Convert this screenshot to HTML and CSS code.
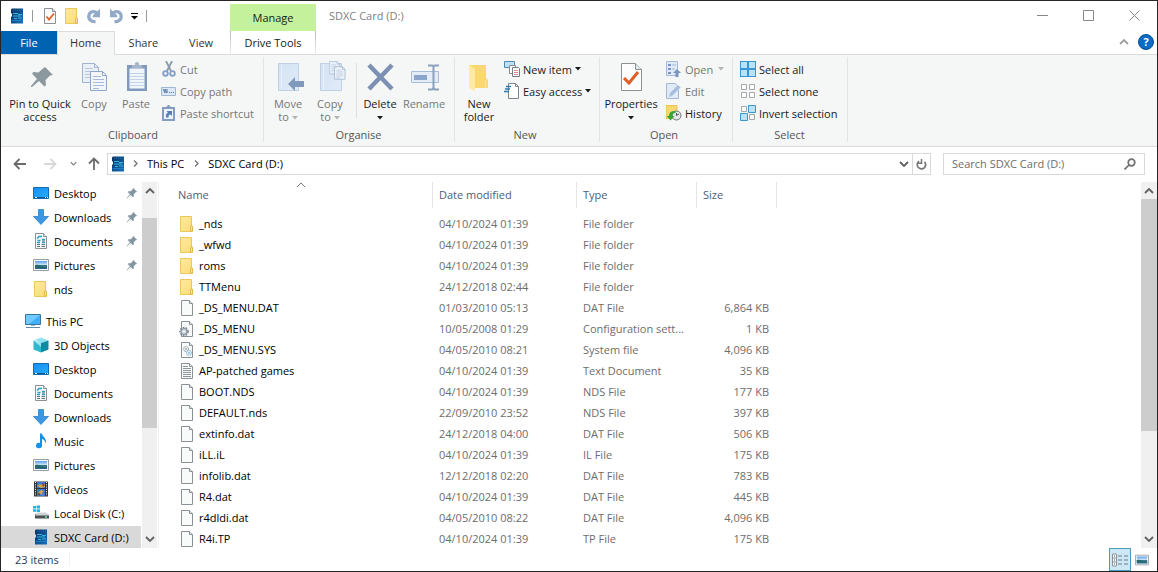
FILE: index.html
```html
<!DOCTYPE html>
<html lang="en-GB">
<head>
    <meta charset="UTF-8">
    <meta name="viewport" content="width=device-width, initial-scale=1.0">
    <title>SDXC Card (D:)</title>
    <link rel="stylesheet" href="styles.css">
</head>
<body>
    <!-- Shared icons -->
    <svg class="sprite" aria-hidden="true">
        <defs>
            <linearGradient id="g-blue" x1="0" y1="0" x2="1" y2="1"><stop offset="0" stop-color="#1a8df0"/><stop offset="1" stop-color="#21b0ff"/></linearGradient>
            <linearGradient id="g-sky" x1="0" y1="0" x2="0" y2="1"><stop offset="0" stop-color="#5b9bea"/><stop offset=".5" stop-color="#d6ebf7"/><stop offset=".55" stop-color="#3d7a86"/><stop offset="1" stop-color="#1f5f9c"/></linearGradient>
            <linearGradient id="g-folder" x1="0" y1="0" x2="1" y2="1"><stop offset="0" stop-color="#ffe9a0"/><stop offset="1" stop-color="#fbdc77"/></linearGradient>
            <linearGradient id="g-pale" x1="0" y1="0" x2="1" y2="1"><stop offset="0" stop-color="#d3e2f3"/><stop offset="1" stop-color="#e2ebf7"/></linearGradient>
            <linearGradient id="g-card" x1="0" y1="0" x2="1" y2="1"><stop offset="0" stop-color="#0a2f5e"/><stop offset="1" stop-color="#1473c0"/></linearGradient>
        </defs>
        <symbol id="i-card" viewBox="0 0 16 16">
            <path d="M2 1.500L3 .5h11v15H2V9l1-1V6L2 5z" fill="url(#g-card)"/>
            <path d="M4 2h9" stroke="#1779b8" stroke-dasharray="1 1"/>
            <path d="M4 5.500h5M9 6.500h4M4 8h8M5 10.500h3M9 10h4" stroke="#35b4e0" fill="none"/>
            <path d="M3 12.500h11" stroke="#1b7fc9"/>
        </symbol>
        <symbol id="i-folder" viewBox="0 0 16 16">
            <path d="M1.500 .5h11v9.500h1v5.500h-12z" fill="url(#g-folder)" stroke="#ecc75b"/>
            <path d="M11.500 15V11l1-1.500 1 1.500v4z" fill="#ffe896" stroke="#e0b84a"/>
        </symbol>
        <symbol id="i-file" viewBox="0 0 16 16">
            <path d="M2.500.5h8l3 3v12h-11z" fill="#f9fafa" stroke="#8b9094"/>
            <path d="M10.500.5v3h3" fill="#e4e7e8" stroke="#8b9094"/>
        </symbol>
        <symbol id="i-check" viewBox="0 0 16 16">
            <use href="#i-file"/>
            <path d="M4.500 8.500l2.500 3 5-6" fill="none" stroke="#e0622a" stroke-width="1.800"/>
        </symbol>
        <symbol id="i-text" viewBox="0 0 16 16">
            <use href="#i-file"/>
            <path d="M4 3.500h5M4 5.500h8M4 7.500h8M4 9.500h8M4 11.500h8M4 13.500h8" stroke="#8d9499"/>
        </symbol>
        <symbol id="i-ini" viewBox="0 0 16 16">
            <use href="#i-file"/>
            <circle cx="5" cy="10.500" r="3.800" fill="#dfe7ec" stroke="#7b8892" stroke-width="2" stroke-dasharray="1.600 1.100"/>
            <circle cx="5" cy="10.500" r="3" fill="#ccd6dc" stroke="#83919b"/>
            <circle cx="5" cy="10.500" r="1" fill="#fff"/>
        </symbol>
        <symbol id="i-sys" viewBox="0 0 16 16">
            <use href="#i-file"/>
            <circle cx="7" cy="7" r="2.500" fill="#e9edef" stroke="#8a959c" stroke-dasharray="1.200 .6"/>
            <circle cx="10" cy="11" r="2.500" fill="#dceefa" stroke="#7cb4d8" stroke-dasharray="1.200 .6"/>
            <circle cx="7" cy="7" r=".8" fill="#7c878e"/><circle cx="10" cy="11" r=".8" fill="#5d9cc4"/>
        </symbol>
        <symbol id="i-desktop" viewBox="0 0 16 16">
            <path d="M.5 2.500h15v11H.5z" fill="url(#g-blue)" stroke="#136bb0"/>
            <path d="M1 12.500h14" stroke="#0c5a9d"/><path d="M2 12.500h2M12 12.500h1M14 12.500h1" stroke="#d7efff"/>
        </symbol>
        <symbol id="i-down" viewBox="0 0 16 16">
            <path d="M5.500.5h5v7h5L8 15.500.5 7.500h5z" fill="#3d96e2" stroke="#2b82cf" stroke-width=".8"/>
        </symbol>
        <symbol id="i-doc" viewBox="0 0 16 16">
            <use href="#i-file"/>
            <path d="M4 5.500l2-2h3M4.500 7.500h3M9 6.500h3M4 9.500h3M9 9.500h3" stroke="#219fc9" stroke-width="1.400" fill="none"/>
            <path d="M4 11.500h3M8.500 11.500H12M4 13.500h3M8.500 13.500H12M9 8h3" stroke="#5d7384"/>
        </symbol>
        <symbol id="i-picture" viewBox="0 0 16 16">
            <path d="M.5 2.500h15v11H.5z" fill="#fff" stroke="#959ca2"/>
            <path d="M2 4h12v8H2z" fill="url(#g-sky)"/>
            <path d="M2 8q4-1 6 1t6 1v1H2z" fill="#296968"/>
        </symbol>
        <symbol id="i-pc" viewBox="0 0 16 16">
            <path d="M.5 1.500h15v10H.5z" fill="#3fb0f7" stroke="#39779e"/>
            <path d="M1 2h14L4 11H1z" fill="#71caff"/>
            <path d="M6 12.500h4" stroke="#8eb8d1"/><path d="M1 14.500h14" stroke="#5d8caa"/>
        </symbol>
        <symbol id="i-cube" viewBox="0 0 16 16">
            <path d="M8 .5l7.500 3L8 6 .5 3.500z" fill="#8fe3ee"/>
            <path d="M.5 3.500L8 6v9.500l-7.500-3z" fill="#30b8cf"/>
            <path d="M15.500 3.500L8 6v9.500l7.500-3z" fill="#0d8ba3"/>
            <path d="M3 2.500L8 6v4L.5 3.500z" fill="#c7f4f8" opacity=".7"/>
        </symbol>
        <symbol id="i-music" viewBox="0 0 16 16">
            <path d="M7 .5h2c0 3 4.500 4 4 9h-1c0-2-1-3-3-3.500v6.500a3 2.700 0 1 1-2-2.500z" fill="#1592e6"/>
        </symbol>
        <symbol id="i-video" viewBox="0 0 16 16">
            <path d="M1 .5h14v15H1z" fill="#30343b"/>
            <path d="M2.500 1v14M13.500 1v14" stroke="#fff" stroke-dasharray="1 1.300"/>
            <path d="M4 1h8v6H4zM4 8h8v7H4z" fill="#3f77d1"/>
            <path d="M4 5l3-2 2 1 3-1v3l-4 1zM5 12l3-3 3 1-2 2 1 2z" fill="#d0a43e"/>
            <path d="M9 2l3 2-2 2zM4 13l3-1v3z" fill="#9a3b31"/>
        </symbol>
        <symbol id="i-disk" viewBox="0 0 16 16">
            <path d="M0 1h3v2.500H0zM3.600.6H7v2.900H3.600zM0 4.200h3v2.500H0zM3.600 4.200H7v2.900H3.600z" fill="#1fb2e7"/>
            <path d="M2 9h13l1 2v2.500H2z" fill="#4b5054"/>
            <path d="M4 7.500h9l3 3H2z" fill="#d0d3d5"/><path d="M12 12h2" stroke="#5cf082" stroke-width="1.400"/>
        </symbol>
        <symbol id="i-pin" viewBox="0 0 12 12">
            <path d="M7 .8L11.200 5l-1.500.3-2 2 .2 2.200-.9.700L4.700 8 1 11.200.6 11 4 7.300 1.700 5l.8-.8 2.200.1 2-2z" fill="#8496a3"/>
        </symbol>
        <symbol id="i-redo" viewBox="0 0 16 16">
            <path d="M9.500 13.800C4 13.500 2 10.500 3 7 4 3.500 8 2.500 11 5" fill="none" stroke="#93a9c8" stroke-width="3.200"/>
            <path d="M14 .8v8.400H6.800V7.500z" fill="#93a9c8"/>
        </symbol>
        <symbol id="i-copy" viewBox="0 0 26 30">
            <path d="M.5.5h12l4 4v15H.5z" fill="#e9f0f8" stroke="#9fb3cf"/><path d="M12.500.5v4h4" fill="none" stroke="#9fb3cf"/>
            <path d="M3 5.500h8M3 8.500h11M3 11.500h11M3 14.500h11" stroke="#b7c8de"/>
            <path d="M8.500 8.500h12l4 4v15h-16z" fill="#f2f6fb" stroke="#8ea6c8"/><path d="M20.500 8.500v4h4" fill="none" stroke="#8ea6c8"/>
            <path d="M11 13.500h8M11 16.500h11M11 19.500h11M11 22.500h11M11 25.500h6" stroke="#a7bad6"/>
        </symbol>
        <symbol id="i-caret" viewBox="0 0 6 4"><path d="M0 0h6L3 3.500z" fill="currentColor"/></symbol>
        <symbol id="i-chev" viewBox="0 0 10 6"><path d="M1 1l4 4 4-4" fill="none" stroke="currentColor" stroke-width="1.800"/></symbol>
    </svg>

    <div class="window">
        <header class="header">
            <div class="header-left">
                <div class="quick-access">
                    <svg class="icon"><use href="#i-card"/></svg>
                    <span class="quick-sep"></span>
                    <button class="quick-btn" aria-label="Properties"><svg class="icon"><use href="#i-check"/></svg></button>
                    <button class="quick-btn" aria-label="New folder"><svg class="icon"><use href="#i-folder"/></svg></button>
                    <button class="quick-btn" aria-label="Undo"><svg class="icon"><use href="#i-redo"/></svg></button>
                    <button class="quick-btn" aria-label="Redo"><svg class="icon flip"><use href="#i-redo"/></svg></button>
                    <button class="quick-btn quick-more" aria-label="Customise"><svg width="7" height="7" viewBox="0 0 7 7"><path d="M0 .5h7" stroke="#000"/><path d="M0 3h7L3.500 6.500z"/></svg></button>
                    <span class="quick-sep"></span>
                </div>
                <nav class="tabs">
                    <button class="tab tab-file">File</button>
                    <button class="tab tab-active">Home</button>
                    <button class="tab">Share</button>
                    <button class="tab">View</button>
                </nav>
            </div>
            <div class="context">
                <div class="context-title">Manage</div>
                <button class="context-tab">Drive Tools</button>
            </div>
            <div class="header-right">
                <div class="title-row">
                    <h1 class="title">SDXC Card (D:)</h1>
                    <button class="win-btn" aria-label="Minimise"><svg width="11" height="11"><path d="M0 5.500h11" stroke="#888"/></svg></button>
                    <button class="win-btn" aria-label="Maximise"><svg width="11" height="11"><path d="M.5.5h10v10H.5z" fill="none" stroke="#888"/></svg></button>
                    <button class="win-btn" aria-label="Close"><svg width="11" height="11"><path d="M.5.5l10 10M10.500.5l-10 10" stroke="#888"/></svg></button>
                </div>
                <div class="help-row">
                    <button class="plain" aria-label="Minimise the ribbon"><svg class="chev up thin"><use href="#i-chev"/></svg></button>
                    <button class="help" aria-label="Help">?</button>
                </div>
            </div>
        </header>

        <section class="ribbon">
            <div class="group">
                <div class="group-body">
                    <button class="big big-pin">
                        <svg class="big-icon" viewBox="0 0 32 32"><path d="M21 6l8 8-3 .5-4.500 4.500.5 5-1.500 1.500-5.500-5.500L8 26H7v-1l6-7-5-5.500L9.500 11l5 .5L19 7.500z" fill="#8b989e"/></svg>
                        <span>Pin to Quick<br>access</span>
                    </button>
                    <button class="big" disabled>
                        <svg class="big-icon" viewBox="-4 -2 32 32"><use href="#i-copy" width="26" height="30"/></svg>
                        <span>Copy</span>
                    </button>
                    <button class="big" disabled>
                        <svg class="big-icon" viewBox="0 0 32 32">
                            <path d="M7 4h20v26H7z" fill="#8199bd"/><path d="M9.500 7.500h15v20h-15z" fill="#f1f6fb"/>
                            <path d="M10 12.500h14M10 15.500h14M10 18.500h14M10 21.500h14M10 24.500h14" stroke="#c2d2e7"/>
                            <path d="M12 7V4h3V2q2-2 4 0v2h3v3z" fill="#a6b6cc"/>
                        </svg>
                        <span>Paste</span>
                    </button>
                    <div class="small-col">
                        <button class="small" disabled>
                            <svg class="icon" viewBox="0 0 16 16"><path d="M5 0l5 10M11 0L6 10" stroke="#8b99ab" stroke-width="1.800"/><circle cx="4.500" cy="12.500" r="2.300" fill="none" stroke="#809fca" stroke-width="1.800"/><circle cx="11.500" cy="12.500" r="2.300" fill="none" stroke="#809fca" stroke-width="1.800"/></svg>
                            Cut
                        </button>
                        <button class="small" disabled>
                            <svg class="icon" viewBox="0 0 16 16"><path d="M.5 4.500h14v8H.5z" fill="#dce8f5" stroke="#a0b7d3"/><path d="M2 6l2 4V6l2 4V6M8 9.500h1M10 9.500h1M12 9.500h1" fill="none" stroke="#5678a5"/></svg>
                            Copy path
                        </button>
                        <button class="small" disabled>
                            <svg class="icon" viewBox="0 0 16 16"><path d="M1 2h13v14H1z" fill="#849dc2"/><path d="M3 4h9v10H3z" fill="#edf3fa"/><path d="M5 3V1.500h1.500V0h2v1.500H10V3z" fill="#8498b3"/><path d="M5 12.500q-.5-4 2-5L5.500 6H11v5L9.200 9.300Q7 10 7.500 12.500z" fill="#5c7fb1"/></svg>
                            Paste shortcut
                        </button>
                    </div>
                </div>
                <div class="group-label">Clipboard</div>
            </div>

            <div class="group group-organise">
                <div class="group-body">
                    <button class="big" disabled>
                        <svg class="big-icon" viewBox="0 0 32 32"><path d="M6.500 2.500h20v27h-20z" fill="url(#g-pale)" stroke="#bfd0e5"/><path d="M9.500 3v26" stroke="#e8f0f9"/><path d="M16 23l7-7v4h9v6h-9v4z" fill="#8199bd"/></svg>
                        <span>Move<br>to <svg class="caret"><use href="#i-caret"/></svg></span>
                    </button>
                    <button class="big" disabled>
                        <svg class="big-icon" viewBox="0 0 32 32"><path d="M6.500 2.500h21v27h-21z" fill="url(#g-pale)" stroke="#bfd0e5"/><path d="M9.500 3v26" stroke="#e8f0f9"/><use href="#i-copy" x="15" y="0" width="17" height="20"/></svg>
                        <span>Copy<br>to <svg class="caret"><use href="#i-caret"/></svg></span>
                    </button>
                    <span class="inner-sep"></span>
                    <button class="big">
                        <svg class="big-icon" viewBox="0 0 32 32"><path d="M5 4l23 24M28 4L5 28" stroke="#7b90b2" stroke-width="4.500"/></svg>
                        <span>Delete<br><svg class="caret"><use href="#i-caret"/></svg></span>
                    </button>
                    <button class="big big-rename" disabled>
                        <svg class="big-icon" viewBox="0 0 32 32"><path d="M3.500 10.500h27v11h-27z" fill="#e4edf7" stroke="#a9bdd8"/><path d="M6 14h13v5H6z" fill="#8ba5cc"/><path d="M20 4.500h4q1.500 0 1.500 2v19q0 3 -1.500 3h-4M31 4.500h-4q-1.500 0-1.500 2v19q0 3 1.500 3h4" fill="none" stroke="#8ba0be" stroke-width="2"/></svg>
                        <span>Rename</span>
                    </button>
                </div>
                <div class="group-label">Organise</div>
            </div>

            <div class="group group-new">
                <div class="group-body">
                    <button class="big big-folder">
                        <svg class="big-icon" viewBox="0 0 32 32"><path d="M6 4h17v13l2 2v8H6z" fill="#f9d872"/><path d="M6 4l6 4v22l-6-3z" fill="#ffeaa3"/><path d="M22.500 27v-8" stroke="#fbe49a"/></svg>
                        <span>New<br>folder</span>
                    </button>
                    <div class="small-col">
                        <button class="small">
                            <svg class="icon" viewBox="0 0 16 16"><path d="M.5.5h10v6H.5z" fill="#bfe1f6" stroke="#4d8bb0"/><path d="M5.500 4.500h6v8h-6z" fill="#fff" stroke="#858b8f"/><path d="M8.500 6.500h6l1 1v8h-7z" fill="#fff" stroke="#777d82"/><path d="M10 9.500h4M10 11.500h4M10 13.500h4" stroke="#df8a8d"/></svg>
                            New item <svg class="caret"><use href="#i-caret"/></svg>
                        </button>
                        <button class="small">
                            <svg class="icon" viewBox="0 0 16 16"><path d="M4.500.5h7l3 3v12h-10z" fill="#fff" stroke="#7f868b"/><path d="M11.500.5v3h3" fill="none" stroke="#7f868b"/><path d="M2 3.500h5M1 6h5M0 8.500h5" stroke="#2e7ab5" stroke-width="1.400"/></svg>
                            Easy access <svg class="caret"><use href="#i-caret"/></svg>
                        </button>
                    </div>
                </div>
                <div class="group-label">New</div>
            </div>

            <div class="group group-open">
                <div class="group-body">
                    <button class="big big-props">
                        <svg class="big-icon" viewBox="0 0 32 32"><path d="M6.500 2.500h14l6 6v21h-20z" fill="#fdfdfd" stroke="#8b9094"/><path d="M20.500 2.500v6h6" fill="#e5e8e9" stroke="#8b9094"/><path d="M9 17l5 5 9-11" fill="none" stroke="#dd5f26" stroke-width="3"/></svg>
                        <span>Properties<br><svg class="caret"><use href="#i-caret"/></svg></span>
                    </button>
                    <div class="small-col">
                        <button class="small" disabled>
                            <svg class="icon" viewBox="0 0 16 16"><path d="M.5.5h11v14H.5z" fill="#e1ebf7" stroke="#a4b8d5"/><path d="M2 3h3v2H2zM2 7h3v2H2zM2 11h3v2H2z" fill="#7894bf"/><path d="M6 4h4M6 8h3" stroke="#9fb5d4"/><path d="M11 8l4 4h-2.500v4h-3v-4H7z" fill="#7894bf"/></svg>
                            Open <svg class="caret caret-far"><use href="#i-caret"/></svg>
                        </button>
                        <button class="small" disabled>
                            <svg class="icon" viewBox="0 0 16 16"><path d="M.5.5h9l3 3v12H.5z" fill="#e1ebf7" stroke="#a4b8d5"/><path d="M3 14l1-4 8-8 2.500 2.500-8 8z" fill="#a7bddd" stroke="#c7d6e9" stroke-width=".6"/></svg>
                            Edit
                        </button>
                        <button class="small">
                            <svg class="icon" viewBox="0 0 16 16"><path d="M0 .5h11v13H0z" fill="#f8d872" stroke="#e4bb42" stroke-width=".8"/><circle cx="10.500" cy="10.500" r="4.500" fill="#e4e7e8" stroke="#6e7579"/><path d="M10.500 8v2.500L13 9" fill="none" stroke="#4b5154"/><path d="M9.500 6Q3 5.500 3 11H.8l3.700 4.500L8.500 11H6.500q0-3 3-3z" fill="#35a63c"/></svg>
                            History
                        </button>
                    </div>
                </div>
                <div class="group-label">Open</div>
            </div>

            <div class="group group-select">
                <div class="group-body">
                    <div class="small-col">
                        <button class="small">
                            <svg class="icon" viewBox="0 0 16 16"><path d="M0 0h16v16H0z" fill="#3a96d2"/><path d="M1 1h6v6H1zM9 1h6v6H9zM1 9h6v6H1zM9 9h6v6H9z" fill="#b9e3fa"/></svg>
                            Select all
                        </button>
                        <button class="small">
                            <svg class="icon" viewBox="0 0 16 16"><path d="M1.500 1.500h5v5h-5zM9.500 1.500h5v5h-5zM1.500 9.500h5v5h-5zM9.500 9.500h5v5h-5z" fill="#fff" stroke="#a4a8ab"/></svg>
                            Select none
                        </button>
                        <button class="small">
                            <svg class="icon" viewBox="0 0 16 16"><path d="M1.500 1.500h5v5h-5zM9.500 9.500h5v5h-5z" fill="#fff" stroke="#a4a8ab"/><path d="M8.500.5h7v7h-7zM.5 8.500h7v7h-7z" fill="#b9e3fa" stroke="#3a96d2"/></svg>
                            Invert selection
                        </button>
                    </div>
                </div>
                <div class="group-label">Select</div>
            </div>
        </section>

        <div class="address-row">
            <button class="nav-btn" aria-label="Back"><svg width="14" height="12" viewBox="0 0 14 12"><path d="M13 6H1.500M6.500 1l-5 5 5 5" fill="none" stroke="#6b6b6b" stroke-width="1.800"/></svg></button>
            <button class="nav-btn" aria-label="Forward" disabled><svg width="14" height="12" viewBox="0 0 14 12"><path d="M1 6h11.500M7.500 1l5 5-5 5" fill="none" stroke="#d8d8d8" stroke-width="1.800"/></svg></button>
            <button class="nav-btn nav-recent" aria-label="Recent locations"><svg class="chev-sm"><use href="#i-chev"/></svg></button>
            <button class="nav-btn nav-up" aria-label="Up"><svg width="12" height="13" viewBox="0 0 12 13"><path d="M6 13V1.500M1 6.500l5-5 5 5" fill="none" stroke="#6b6b6b" stroke-width="1.800"/></svg></button>
            <div class="address">
                <svg class="icon"><use href="#i-card"/></svg>
                <svg class="crumb-sep" viewBox="0 0 5 7"><path d="M1 .5l3 3-3 3" fill="none" stroke="#777" stroke-width="1.400"/></svg>
                <a class="crumb" href="#">This PC</a>
                <svg class="crumb-sep" viewBox="0 0 5 7"><path d="M1 .5l3 3-3 3" fill="none" stroke="#777" stroke-width="1.400"/></svg>
                <a class="crumb" href="#">SDXC Card (D:)</a>
                <button class="plain address-drop" aria-label="Previous locations"><svg class="chev"><use href="#i-chev"/></svg></button>
                <button class="plain refresh" aria-label="Refresh"><svg width="11" height="12" viewBox="0 0 11 12"><path d="M8.500 3.800A4.200 4.200 0 1 1 3 3.300" fill="none" stroke="#777" stroke-width="1.700"/><path d="M4.500 0v4.200H9" fill="none" stroke="#777" stroke-width="1.500" transform="matrix(-1 0 0 1 10 1)"/></svg></button>
            </div>
            <label class="search">
                <input type="search" placeholder="Search SDXC Card (D:)" aria-label="Search SDXC Card (D:)">
                <svg width="12" height="12" viewBox="0 0 12 12"><circle cx="7.500" cy="4.500" r="3.300" fill="none" stroke="#707070" stroke-width="1.700"/><path d="M5 7l-4.500 4.500" stroke="#707070" stroke-width="1.700"/></svg>
            </label>
        </div>

        <main class="main">
            <aside class="sidebar">
                <nav class="tree">
                    <a class="node" href="#"><svg class="icon"><use href="#i-desktop"/></svg>Desktop<svg class="pin"><use href="#i-pin"/></svg></a>
                    <a class="node" href="#"><svg class="icon"><use href="#i-down"/></svg>Downloads<svg class="pin"><use href="#i-pin"/></svg></a>
                    <a class="node" href="#"><svg class="icon"><use href="#i-doc"/></svg>Documents<svg class="pin"><use href="#i-pin"/></svg></a>
                    <a class="node" href="#"><svg class="icon"><use href="#i-picture"/></svg>Pictures<svg class="pin"><use href="#i-pin"/></svg></a>
                    <a class="node" href="#"><svg class="icon"><use href="#i-folder"/></svg>nds</a>
                    <a class="node node-root" href="#"><svg class="icon"><use href="#i-pc"/></svg>This PC</a>
                    <a class="node" href="#"><svg class="icon"><use href="#i-cube"/></svg>3D Objects</a>
                    <a class="node" href="#"><svg class="icon"><use href="#i-desktop"/></svg>Desktop</a>
                    <a class="node" href="#"><svg class="icon"><use href="#i-doc"/></svg>Documents</a>
                    <a class="node" href="#"><svg class="icon"><use href="#i-down"/></svg>Downloads</a>
                    <a class="node" href="#"><svg class="icon"><use href="#i-music"/></svg>Music</a>
                    <a class="node" href="#"><svg class="icon"><use href="#i-picture"/></svg>Pictures</a>
                    <a class="node" href="#"><svg class="icon"><use href="#i-video"/></svg>Videos</a>
                    <a class="node" href="#"><svg class="icon"><use href="#i-disk"/></svg>Local Disk (C:)</a>
                    <a class="node node-selected" href="#"><svg class="icon"><use href="#i-card"/></svg>SDXC Card (D:)</a>
                </nav>
                <div class="scrollbar">
                    <svg class="chev up"><use href="#i-chev"/></svg>
                    <div class="track track-tree"><div class="thumb"></div></div>
                    <svg class="chev"><use href="#i-chev"/></svg>
                </div>
            </aside>

            <div class="files">
                <table class="file-table">
                    <colgroup><col class="col-name"><col class="col-date"><col class="col-type"><col class="col-size"></colgroup>
                    <thead>
                        <tr>
                            <th>Name<svg class="sort" viewBox="0 0 10 6"><path d="M1 5l4-4 4 4" fill="none" stroke="#777"/></svg></th>
                            <th>Date modified</th>
                            <th>Type</th>
                            <th>Size</th>
                        </tr>
                    </thead>
                    <tbody>
                        <tr><td><svg class="icon"><use href="#i-folder"/></svg>_nds</td><td>04/10/2024 01:39</td><td>File folder</td><td></td></tr>
                        <tr><td><svg class="icon"><use href="#i-folder"/></svg>_wfwd</td><td>04/10/2024 01:39</td><td>File folder</td><td></td></tr>
                        <tr><td><svg class="icon"><use href="#i-folder"/></svg>roms</td><td>04/10/2024 01:39</td><td>File folder</td><td></td></tr>
                        <tr><td><svg class="icon"><use href="#i-folder"/></svg>TTMenu</td><td>24/12/2018 02:44</td><td>File folder</td><td></td></tr>
                        <tr><td><svg class="icon"><use href="#i-file"/></svg>_DS_MENU.DAT</td><td>01/03/2010 05:13</td><td>DAT File</td><td>6,864 KB</td></tr>
                        <tr><td><svg class="icon"><use href="#i-ini"/></svg>_DS_MENU</td><td>10/05/2008 01:29</td><td>Configuration sett...</td><td>1 KB</td></tr>
                        <tr><td><svg class="icon"><use href="#i-sys"/></svg>_DS_MENU.SYS</td><td>04/05/2010 08:21</td><td>System file</td><td>4,096 KB</td></tr>
                        <tr><td><svg class="icon"><use href="#i-text"/></svg>AP-patched games</td><td>04/10/2024 01:39</td><td>Text Document</td><td>35 KB</td></tr>
                        <tr><td><svg class="icon"><use href="#i-file"/></svg>BOOT.NDS</td><td>04/10/2024 01:39</td><td>NDS File</td><td>177 KB</td></tr>
                        <tr><td><svg class="icon"><use href="#i-file"/></svg>DEFAULT.nds</td><td>22/09/2010 23:52</td><td>NDS File</td><td>397 KB</td></tr>
                        <tr><td><svg class="icon"><use href="#i-file"/></svg>extinfo.dat</td><td>24/12/2018 04:00</td><td>DAT File</td><td>506 KB</td></tr>
                        <tr><td><svg class="icon"><use href="#i-file"/></svg>iLL.iL</td><td>04/10/2024 01:39</td><td>IL File</td><td>175 KB</td></tr>
                        <tr><td><svg class="icon"><use href="#i-file"/></svg>infolib.dat</td><td>12/12/2018 02:20</td><td>DAT File</td><td>783 KB</td></tr>
                        <tr><td><svg class="icon"><use href="#i-file"/></svg>R4.dat</td><td>04/10/2024 01:39</td><td>DAT File</td><td>445 KB</td></tr>
                        <tr><td><svg class="icon"><use href="#i-file"/></svg>r4dldi.dat</td><td>04/05/2010 08:22</td><td>DAT File</td><td>4,096 KB</td></tr>
                        <tr><td><svg class="icon"><use href="#i-file"/></svg>R4i.TP</td><td>04/10/2024 01:39</td><td>TP File</td><td>175 KB</td></tr>
                    </tbody>
                </table>
            </div>
            <div class="scrollbar">
                <svg class="chev up"><use href="#i-chev"/></svg>
                <div class="track track-files"><div class="thumb"></div></div>
                <svg class="chev"><use href="#i-chev"/></svg>
            </div>
        </main>

        <footer class="status">
            <span class="status-count">23 items</span>
            <button class="view-btn view-active" aria-label="Details"><svg width="16" height="14" viewBox="0 0 16 14"><path d="M.5 1h4v12h-4zM.5 5h4M.5 9h4" fill="#fff" stroke="#8c9398"/><path d="M2 3h1M2 7h1M2 11h1" stroke="#3c464d"/><path d="M6 3h4M12 3h4M6 7h4M12 7h4M6 11h4M12 11h4" stroke="#6c7b85"/></svg></button>
            <button class="view-btn" aria-label="Large icons"><svg width="14" height="14" viewBox="0 0 16 16"><use href="#i-picture"/></svg></button>
        </footer>
    </div>
</body>
</html>
```

FILE: styles.css
```css
* {
    margin: 0;
    padding: 0;
    box-sizing: border-box;
}

body {
    font-family: "Open Sans", "Noto Sans", sans-serif;
    font-size: 11px;
    line-height: 13px;
    color: #1a1a1a;
    background: #fff;
}

button,
input {
    font: inherit;
    color: inherit;
    background: none;
    border: none;
}

a {
    color: inherit;
    text-decoration: none;
}

svg {
    flex-shrink: 0;
}

.sprite {
    position: absolute;
    width: 0;
    height: 0;
}

.icon {
    width: 16px;
    height: 16px;
}

.flip {
    transform: scaleX(-1);
}

.chev {
    width: 10px;
    height: 6px;
    color: #606060;
}

.chev-sm {
    width: 7px;
    height: 5px;
    color: #808080;
}

.up {
    transform: rotate(180deg);
}

.thin {
    color: #a0a0a0;
}

.plain {
    display: flex;
    align-items: center;
    justify-content: center;
}

.window {
    display: flex;
    flex-direction: column;
    height: 100vh;
    border: 1px solid #262626;
    overflow: hidden;
}

/* Title bar and tabs */
.header {
    display: flex;
    height: 53px;
    flex-shrink: 0;
}

.header-left {
    width: 229px;
}

.quick-access {
    display: flex;
    align-items: center;
    height: 30px;
    padding-left: 8px;
}

.quick-sep {
    width: 1px;
    height: 12px;
    margin: 0 6px 0 7px;
    background: #999;
}

.quick-btn {
    display: flex;
    align-items: center;
    justify-content: center;
    width: 22px;
    height: 22px;
}

.quick-more {
    width: 14px;
}

.quick-more + .quick-sep {
    margin-left: 5px;
}

.tabs {
    display: flex;
    height: 24px;
}

.tab {
    width: 58px;
    height: 23px;
    text-align: center;
    color: #333;
}

.tab-file {
    width: 56px;
    color: #fff;
    background: #0063b1;
}

.tab-active {
    height: 24px;
    position: relative;
    padding-bottom: 2px;
    background: #f5f6f6;
    border: 1px solid #dadbdc;
    border-bottom: none;
}

.context {
    width: 86px;
}

.context-title {
    height: 27px;
    margin-top: 3px;
    line-height: 28px;
    text-align: center;
    background: #c4f19c;
}

.context-tab {
    width: 100%;
    height: 23px;
    border: 1px solid;
    border-width: 0 1px;
    border-image: linear-gradient(#b8b8b8, #f0f0f0) 1;
}

.header-right {
    flex: 1;
}

.title-row {
    display: flex;
    align-items: center;
    height: 30px;
    padding-left: 13px;
}

.title {
    flex: 1;
    padding-bottom: 2px;
    font-size: 11px;
    font-weight: normal;
    color: #808080;
}

.win-btn {
    display: flex;
    align-items: center;
    justify-content: center;
    width: 46px;
    height: 28px;
    padding-bottom: 2px;
}

.help-row {
    display: flex;
    align-items: center;
    justify-content: flex-end;
    height: 23px;
    gap: 9px;
    padding: 0 3px 2px 0;
}

.help {
    width: 16px;
    height: 16px;
    border: 1px solid #084f94;
    border-radius: 50%;
    color: #fff;
    background: #0c6bc4;
    font-weight: bold;
}

/* Ribbon */
.ribbon {
    display: flex;
    height: 93px;
    flex-shrink: 0;
    padding: 2px 0 4px;
    background: #f5f6f6;
    border-top: 1px solid #dadbdc;
    border-bottom: 1px solid #dadbdc;
}

.group {
    display: flex;
    flex-direction: column;
    width: 263px;
    padding-left: 6px;
    border-right: 1px solid #e1e3e4;
}

.group-organise {
    width: 191px;
    padding-left: 3px;
}

.group-new {
    width: 145px;
    padding-left: 0;
}

.group-open {
    width: 133px;
    padding-left: 0;
}

.group-select {
    width: 115px;
    padding-left: 3px;
}

.group-body {
    display: flex;
    flex: 1;
}

.group-label {
    height: 14px;
    padding-right: 4px;
    text-align: center;
    color: #555;
}

.big {
    display: flex;
    flex-direction: column;
    align-items: center;
    gap: 4px;
    width: 42px;
    padding-top: 4px;
    white-space: nowrap;
}

.big:disabled,
.small:disabled {
    color: #777;
}

.big-icon {
    width: 32px;
    height: 32px;
}

.big-pin {
    width: 66px;
}

.big-rename {
    width: 46px;
}

.big-folder {
    width: 48px;
}

.big-props {
    width: 62px;
}

.inner-sep {
    width: 1px;
    height: 55px;
    margin: 6px 2px 0 5px;
    background: #dcdfe0;
}

.small-col {
    padding: 1px 0 0 4px;
}

.group-new .small-col {
    padding-left: 1px;
}

.small {
    display: flex;
    align-items: center;
    gap: 3px;
    height: 22px;
    white-space: nowrap;
}

.caret {
    width: 6px;
    height: 4px;
    vertical-align: middle;
}

.caret-far {
    margin-left: 2px;
}

:disabled .caret {
    color: #b4b4b4;
}

/* Address bar */
.address-row {
    display: flex;
    align-items: center;
    height: 35px;
    flex-shrink: 0;
    padding: 0 12px 2px 4px;
}

.nav-btn {
    display: flex;
    align-items: center;
    justify-content: center;
    width: 30px;
    height: 22px;
}

.nav-recent {
    width: 16px;
}

.nav-up {
    width: 26px;
}

.address {
    display: flex;
    align-items: center;
    flex: 1;
    height: 22px;
    padding-left: 2px;
    border: 1px solid #d9d9d9;
}

.crumb {
    color: #000;
}

.crumb-sep {
    width: 5px;
    height: 7px;
    margin: 0 9px 0 7px;
}

.crumb + .crumb-sep {
    margin-left: 10px;
}

.address-drop {
    width: 16px;
    height: 20px;
    margin-left: auto;
}

.refresh {
    width: 18px;
    height: 20px;
    border-left: 1px solid #d9d9d9;
}

.search {
    display: flex;
    align-items: center;
    width: 202px;
    height: 22px;
    margin-left: 12px;
    padding: 0 8px;
    border: 1px solid #d9d9d9;
}

.search input {
    flex: 1;
    min-width: 0;
    outline: none;
}

.search input::placeholder {
    color: #6d6d6d;
    opacity: 1;
}

/* Folder tree */
.main {
    display: flex;
    flex: 1;
    min-height: 0;
}

.sidebar {
    display: flex;
    width: 158px;
    border-right: 1px solid #f0f0f0;
}

.tree {
    flex: 1;
    overflow: hidden;
}

.node {
    display: flex;
    align-items: center;
    gap: 5px;
    height: 24px;
    padding: 0 3px 2px 32px;
    color: #000;
    white-space: nowrap;
}

.node-root {
    margin-top: 8px;
    padding-left: 24px;
}

.node-selected {
    background: #d9d9d9;
}

.pin {
    width: 12px;
    height: 12px;
    margin-left: auto;
}

.scrollbar {
    display: flex;
    flex-direction: column;
    align-items: center;
    width: 16px;
    padding: 6px 0;
    background: #f0f0f0;
}

.sidebar .scrollbar {
    margin: 0 1px;
    width: 15px;
}

.track {
    display: flex;
    flex-direction: column;
    flex: 1;
    width: 100%;
    padding: 5px 0;
}

.thumb {
    height: 67%;
    background: #cdcdcd;
}

.track-tree {
    padding-top: 24px;
}

.track-files .thumb {
    height: 70%;
}

/* File list */
.files {
    flex: 1;
    overflow: hidden;
    padding-left: 12px;
}

.file-table {
    table-layout: fixed;
    width: 606px;
    border-collapse: separate;
    border-spacing: 0;
}

.col-name {
    width: 262px;
}

.col-date {
    width: 144px;
}

.col-type {
    width: 120px;
}

.col-size {
    width: 80px;
}

th {
    position: relative;
    height: 26px;
    padding: 0 0 2px 6px;
    border-right: 1px solid #e5e5e5;
    text-align: left;
    font-weight: normal;
    color: #4c607a;
}

th:first-child {
    padding-left: 7px;
}

.sort {
    position: absolute;
    top: 0;
    left: 48%;
    width: 10px;
    height: 6px;
}

tbody::before {
    content: '';
    display: block;
    height: 5px;
}

td {
    height: 21px;
    padding-left: 6px;
    color: #6d6d6d;
    white-space: nowrap;
}

td:first-child {
    padding-left: 8px;
    color: #000;
}

td .icon {
    margin-right: 4px;
    vertical-align: -4px;
}

td:last-child {
    padding-right: 8px;
    text-align: right;
}

/* Status bar */
.status {
    display: flex;
    align-items: center;
    height: 23px;
    flex-shrink: 0;
    padding-right: 4px;
    color: #1e395b;
}

.status-count {
    margin-right: auto;
    padding: 0 10px 0 14px;
    border-right: 1px solid #f0f0f0;
}

.view-btn {
    display: flex;
    align-items: center;
    justify-content: center;
    width: 22px;
    height: 23px;
}

.view-active {
    border: 1px solid #4a9cb8;
    background: #cce8f4;
}
```
